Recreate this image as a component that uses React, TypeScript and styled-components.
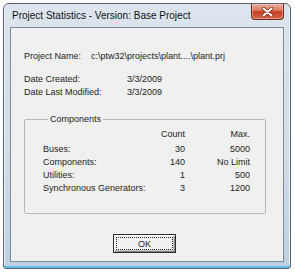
import React from "react";
import styled, { createGlobalStyle } from "styled-components";

const Global = createGlobalStyle`
  html, body { margin: 0; padding: 0; background: #ffffff; }
  body { font-family: "Liberation Sans", Arial, sans-serif; }
`;

const Page = styled.div`
  width: 295px;
  height: 273px;
  padding: 3px 0 0 3px;
  box-sizing: border-box;
`;

const Window = styled.div`
  width: 288px;
  height: 266px;
  box-sizing: border-box;
  border: 1px solid #56636f;
  border-radius: 6px 6px 3px 3px;
  background: linear-gradient(to bottom, #dce5ee 0%, #d2dde8 55%, #bcd0e1 100%);
  box-shadow: inset 0 -2px 0 #63c0e6, inset 1px 0 0 #eef3f8, inset -1px 0 0 #eef3f8;
  display: flex;
  flex-direction: column;
`;

const TitleBar = styled.div`
  height: 23px;
  display: flex;
  align-items: flex-start;
  justify-content: space-between;
  padding: 0 6px 0 8px;
`;

const Title = styled.div`
  font-family: "Liberation Sans", Arial, sans-serif;
  font-size: 10px;
  line-height: 12px;
  color: #111;
  margin-top: 6px;
`;

const CloseButton = styled.div`
  width: 33px;
  height: 16px;
  box-sizing: border-box;
  border: 1px solid #6e2a1e;
  border-top: none;
  border-radius: 0 0 4px 4px;
  background: linear-gradient(to bottom, #eab0a2 0%, #dc7a63 42%, #c63b1f 52%, #d46a4c 100%);
  box-shadow: inset 0 0 0 1px rgba(255, 210, 200, 0.45);
  display: flex;
  align-items: center;
  justify-content: center;
`;

const Client = styled.div`
  flex: 1;
  margin: 0 6px 6px 6px;
  border: 1px solid #7d8b99;
  background: #f0f0f0;
  display: flex;
  flex-direction: column;
  padding: 22px 17px 0 13px;
  font-size: 9px;
  line-height: 13px;
  color: #1c1c1c;
`;

const InfoRow = styled.div<{ $valueLeft: number }>`
  display: grid;
  grid-template-columns: ${(p) => p.$valueLeft}px 1fr;
  height: 13px;
  white-space: nowrap;
`;

const Spacer = styled.div<{ $h: number }>`
  height: ${(p) => p.$h}px;
`;

const Group = styled.fieldset`
  margin: 0;
  padding: 3px 16px 18px 18px;
  border: 1px solid #b8b8b8;
  border-radius: 2px;
  min-width: 0;
`;

const Legend = styled.legend`
  padding: 0 2px;
  margin-left: 5px;
  font-size: 9px;
  line-height: 11px;
`;

const StatsGrid = styled.div`
  display: grid;
  grid-template-columns: 107px 35px 65px;
  grid-template-rows: 15px;
  grid-auto-rows: 13px;
  white-space: nowrap;
`;

const HeaderCell = styled.div`
  text-align: right;
`;

const Cell = styled.div<{ $align?: "left" | "right" }>`
  text-align: ${(p) => p.$align ?? "right"};
`;

const Footer = styled.div`
  display: flex;
  justify-content: center;
  padding-top: 20px;
  margin-left: -1px;
`;

const OkButton = styled.button`
  width: 63px;
  height: 19px;
  box-sizing: border-box;
  border: 1px solid #2c2c2c;
  background: #f0f0f0;
  box-shadow: inset 1px 1px 0 #ffffff, inset -1px -1px 0 #8a8a8a, inset -2px -2px 0 #c8c8c8;
  padding: 2px;
  font-family: "Liberation Sans", Arial, sans-serif;
  font-size: 9px;
  color: #1c1c1c;
  display: flex;
`;

const Focus = styled.span`
  flex: 1;
  border: 1px dotted #222;
  display: flex;
  align-items: center;
  justify-content: center;
  line-height: 10px;
`;

const rows = [
  { name: "Buses:", count: "30", max: "5000" },
  { name: "Components:", count: "140", max: "No Limit" },
  { name: "Utilities:", count: "1", max: "500" },
  { name: "Synchronous Generators:", count: "3", max: "1200" },
];

export default function App() {
  return (
    <Page>
      <Global />
      <Window>
        <TitleBar>
          <Title>Project Statistics - Version: Base Project</Title>
          <CloseButton>
            <svg width="13" height="10" viewBox="0 0 13 10">
              <path d="M2.5 1.5 L10.5 8.5 M10.5 1.5 L2.5 8.5" stroke="#6b2418" strokeWidth="3.4" strokeLinecap="round" />
              <path d="M2.5 1.5 L10.5 8.5 M10.5 1.5 L2.5 8.5" stroke="#ffffff" strokeWidth="2" strokeLinecap="round" />
            </svg>
          </CloseButton>
        </TitleBar>
        <Client>
          <InfoRow $valueLeft={67}>
            <span>Project Name:</span>
            <span>c:\ptw32\projects\plant....\plant.prj</span>
          </InfoRow>
          <Spacer $h={10} />
          <InfoRow $valueLeft={103}>
            <span>Date Created:</span>
            <span>3/3/2009</span>
          </InfoRow>
          <InfoRow $valueLeft={103}>
            <span>Date Last Modified:</span>
            <span>3/3/2009</span>
          </InfoRow>
          <Spacer $h={15} />
          <Group>
            <Legend>Components</Legend>
            <StatsGrid>
              <HeaderCell />
              <HeaderCell>Count</HeaderCell>
              <HeaderCell>Max.</HeaderCell>
              {rows.map((r) => (
                <React.Fragment key={r.name}>
                  <Cell $align="left">{r.name}</Cell>
                  <Cell>{r.count}</Cell>
                  <Cell>{r.max}</Cell>
                </React.Fragment>
              ))}
            </StatsGrid>
          </Group>
          <Footer>
            <OkButton>
              <Focus>OK</Focus>
            </OkButton>
          </Footer>
        </Client>
      </Window>
    </Page>
  );
}
